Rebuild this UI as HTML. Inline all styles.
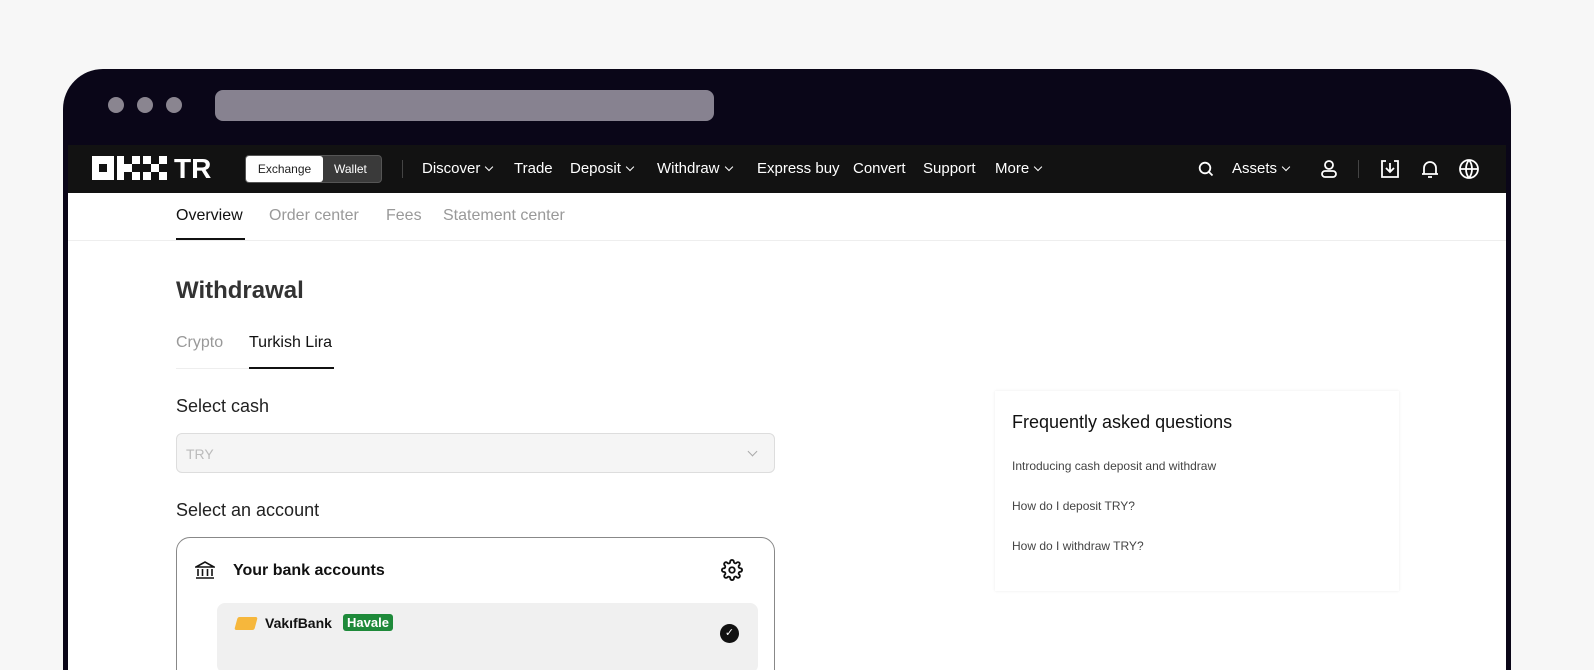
<!DOCTYPE html>
<html><head><meta charset="utf-8"><style>
*{margin:0;padding:0;box-sizing:border-box}
html,body{width:1594px;height:670px;overflow:hidden}
body{background:#f7f7f7;font-family:"Liberation Sans",sans-serif;position:relative}
.frame{position:absolute;left:63px;top:69px;width:1448px;height:601px;background:#0a0618;border-radius:40px 40px 0 0}
.dot{position:absolute;top:97px;width:16px;height:16px;border-radius:50%;background:#8a8590}
.addr{position:absolute;left:215px;top:90px;width:499px;height:31px;border-radius:8px;background:#878290}
.nav{position:absolute;left:68px;top:145px;width:1438px;height:48px;background:#121212;color:#fff;font-size:15px}
.nav span{position:absolute;top:15px;white-space:nowrap}
.ch{display:inline-block;width:6px;height:6px;border-right:1.3px solid #fff;border-bottom:1.3px solid #fff;transform:rotate(45deg);margin-left:6px;position:relative;top:-3px}
.content{position:absolute;left:68px;top:193px;width:1438px;height:477px;background:#fff;overflow:hidden}
.t{position:absolute;white-space:nowrap}
svg{position:absolute}
</style></head><body>
<div class="frame"></div>
<div class="dot" style="left:108px"></div><div class="dot" style="left:137px"></div><div class="dot" style="left:166px"></div>
<div class="addr"></div>
<div class="nav">
 <svg style="left:24px;top:11px" width="128" height="24" viewBox="0 0 128 24" fill="#fff">
  <path d="M0 0h22v24H0zM7 8v8h8V8z" fill-rule="evenodd"/>
  <rect x="25" y="0" width="7" height="24"/><rect x="32" y="8" width="8" height="8"/><rect x="40" y="0" width="8" height="8"/><rect x="40" y="16" width="8" height="8"/>
  <rect x="51" y="0" width="8" height="8"/><rect x="51" y="16" width="8" height="8"/><rect x="59" y="8" width="8" height="8"/><rect x="67" y="0" width="8" height="8"/><rect x="67" y="16" width="8" height="8"/>
  <text x="82" y="22" font-family="Liberation Sans" font-weight="bold" font-size="28">TR</text>
 </svg>
 <div style="position:absolute;left:177px;top:10px;width:137px;height:28px;border-radius:4px;background:#3a3a3a;border:1px solid #555"></div>
 <div style="position:absolute;left:178px;top:11px;width:77px;height:26px;border-radius:3px;background:#fff;color:#222;font-size:12px;text-align:center;line-height:26px">Exchange</div>
 <div class="t" style="left:266px;top:17px;font-size:12px">Wallet</div>
 <div style="position:absolute;left:334px;top:15px;width:1px;height:18px;background:#444"></div>
 <span style="left:354px">Discover<i class="ch"></i></span><span style="left:446px">Trade</span><span style="left:502px">Deposit<i class="ch"></i></span><span style="left:589px">Withdraw<i class="ch"></i></span><span style="left:689px">Express buy</span><span style="left:785px">Convert</span><span style="left:855px">Support</span><span style="left:927px">More<i class="ch"></i></span>
 <svg style="left:1130px;top:16px" width="16" height="16" viewBox="0 0 16 16" fill="none" stroke="#fff" stroke-width="1.8"><circle cx="7" cy="7" r="5.3"/><path d="M11 11l3.5 3.5"/></svg>
 <span style="left:1164px">Assets<i class="ch"></i></span>
 <svg style="left:1252px;top:14px" width="18" height="20" viewBox="0 0 18 20" fill="none" stroke="#fff" stroke-width="1.8"><circle cx="9" cy="6" r="4"/><rect x="2" y="12" width="14" height="6" rx="3"/></svg>
 <div style="position:absolute;left:1290px;top:15px;width:1px;height:18px;background:#444"></div>
 <svg style="left:1312px;top:14px" width="20" height="20" viewBox="0 0 20 20" fill="none" stroke="#fff" stroke-width="1.8"><path d="M6 2H2v16h16V2h-4M10 4v9M6 9l4 4 4-4"/></svg>
 <svg style="left:1352px;top:14px" width="20" height="20" viewBox="0 0 20 20" fill="none" stroke="#fff" stroke-width="1.8"><path d="M4 15V9a6 6 0 0112 0v6zM2 15h16M8 18h4"/></svg>
 <svg style="left:1390px;top:13px" width="22" height="22" viewBox="0 0 22 22" fill="none" stroke="#fff" stroke-width="1.8"><circle cx="11" cy="11" r="9"/><path d="M2 11h18M11 2c-4 5-4 13 0 18M11 2c4 5 4 13 0 18"/></svg>
</div>
<div class="content">
 <div class="t" style="left:108px;top:14px;font-size:16px;color:#111">Overview</div>
 <div style="position:absolute;left:108px;top:45px;width:69px;height:2px;background:#111"></div>
 <div class="t" style="left:201px;top:14px;font-size:16px;color:#999">Order center</div>
 <div class="t" style="left:318px;top:14px;font-size:16px;color:#999">Fees</div>
 <div class="t" style="left:375px;top:14px;font-size:16px;color:#999">Statement center</div>
 <div style="position:absolute;left:0;top:47px;width:100%;height:1px;background:#eee"></div>
 <div class="t" style="left:108px;top:84px;font-size:24px;font-weight:bold;color:#333">Withdrawal</div>
 <div class="t" style="left:108px;top:141px;font-size:16px;color:#999">Crypto</div>
 <div class="t" style="left:181px;top:141px;font-size:16px;color:#111">Turkish Lira</div>
 <div style="position:absolute;left:108px;top:175px;width:158px;height:1px;background:#eee"></div>
 <div style="position:absolute;left:181px;top:174px;width:85px;height:2px;background:#111"></div>
 <div class="t" style="left:108px;top:203px;font-size:18px;color:#222">Select cash</div>
 <div style="position:absolute;left:108px;top:240px;width:599px;height:40px;border:1px solid #ddd;border-radius:6px;background:#f5f5f5"></div>
 <div class="t" style="left:118px;top:253px;font-size:14px;color:#bbb">TRY</div>
 <div style="position:absolute;left:681px;top:255px;width:7px;height:7px;border-right:1.3px solid #aaa;border-bottom:1.3px solid #aaa;transform:rotate(45deg)"></div>
 <div class="t" style="left:108px;top:307px;font-size:18px;color:#222">Select an account</div>
 <div style="position:absolute;left:108px;top:344px;width:599px;height:160px;border:1px solid #888;border-radius:14px"></div>
 <svg style="left:127px;top:368px" width="20" height="18" viewBox="0 0 20 18" fill="none" stroke="#111" stroke-width="1.6"><path d="M1 6L10 1l9 5zM3 8v7M7.5 8v7M12.5 8v7M17 8v7M1 17h18"/></svg>
 <div class="t" style="left:165px;top:369px;font-size:16px;font-weight:bold;color:#111">Your bank accounts</div>
 <svg style="left:653px;top:366px" width="22" height="22" viewBox="0 0 24 24" fill="none" stroke="#111" stroke-width="2"><circle cx="12" cy="12" r="3"/><path d="M19.4 15a1.7 1.7 0 00.3 1.8l.1.1a2 2 0 11-2.8 2.8l-.1-.1a1.7 1.7 0 00-1.8-.3 1.7 1.7 0 00-1 1.5V21a2 2 0 11-4 0v-.1A1.7 1.7 0 009 19.4a1.7 1.7 0 00-1.8.3l-.1.1a2 2 0 11-2.8-2.8l.1-.1a1.7 1.7 0 00.3-1.8 1.7 1.7 0 00-1.5-1H3a2 2 0 110-4h.1A1.7 1.7 0 004.6 9a1.7 1.7 0 00-.3-1.8l-.1-.1a2 2 0 112.8-2.8l.1.1a1.7 1.7 0 001.8.3H9a1.7 1.7 0 001-1.5V3a2 2 0 114 0v.1a1.7 1.7 0 001 1.5 1.7 1.7 0 001.8-.3l.1-.1a2 2 0 112.8 2.8l-.1.1a1.7 1.7 0 00-.3 1.8V9a1.7 1.7 0 001.5 1H21a2 2 0 110 4h-.1a1.7 1.7 0 00-1.5 1z"/></svg>
 <div style="position:absolute;left:149px;top:410px;width:541px;height:70px;background:#f0f0f0;border-radius:8px"></div>
 <div style="position:absolute;left:168px;top:424px;width:20px;height:13px;background:#f6b73c;border-radius:2px;transform:skewX(-15deg)"></div>
 <div class="t" style="left:197px;top:422px;font-size:14px;font-weight:bold;color:#111">VakıfBank</div>
 <div class="t" style="left:275px;top:421px;font-size:13px;font-weight:bold;color:#fff;background:#1e8a3a;padding:1px 4px;border-radius:3px">Havale</div>
 <div style="position:absolute;left:652px;top:431px;width:19px;height:19px;border-radius:50%;background:#111;color:#fff;font-size:11px;text-align:center;line-height:19px">✓</div>
 <div style="position:absolute;left:927px;top:198px;width:404px;height:200px;background:#fff;box-shadow:0 0 3px rgba(0,0,0,.08)"></div>
 <div class="t" style="left:944px;top:219px;font-size:18px;color:#111">Frequently asked questions</div>
 <div class="t" style="left:944px;top:266px;font-size:12px;color:#444">Introducing cash deposit and withdraw</div>
 <div class="t" style="left:944px;top:306px;font-size:12px;color:#444">How do I deposit TRY?</div>
 <div class="t" style="left:944px;top:346px;font-size:12px;color:#444">How do I withdraw TRY?</div>
</div>
</body></html>
